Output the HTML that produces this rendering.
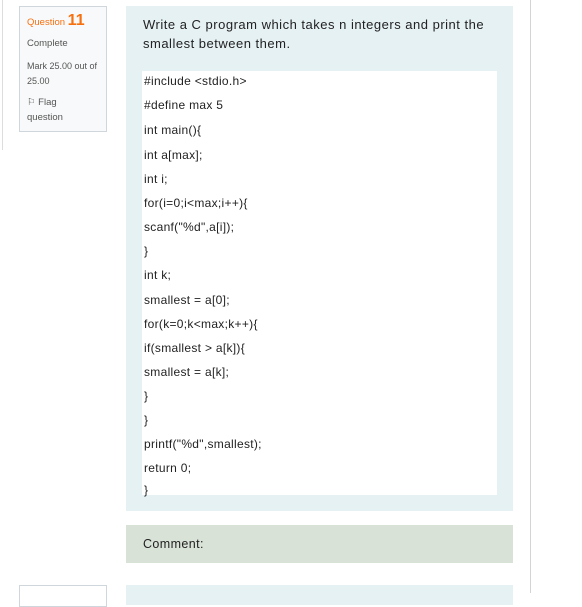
<!DOCTYPE html>
<html><head><style>
body{margin:0;width:582px;height:593px;position:relative;overflow:hidden;background:#fff;font-family:"Liberation Sans",sans-serif;color:#333}
.ab{position:absolute}
.code div{position:absolute;left:2px;font-size:12px;letter-spacing:0.3px;color:#222;white-space:pre}
</style></head><body>
<div class="ab" style="left:2px;top:0;width:1px;height:150px;background:#ddd"></div>
<div class="ab" style="left:530px;top:0;width:1px;height:593px;background:#d4d4d4"></div>
<div class="ab" style="left:19px;top:6px;width:86px;height:124px;border:1px solid #cfd6dc;background:#f8f9fa"></div>
<div class="ab" style="left:27px;top:12px;font-size:9.5px;color:#f7700f">Question <span style="font-size:16px;font-weight:bold">11</span></div>
<div class="ab" style="left:27px;top:38px;font-size:9.5px;color:#555">Complete</div>
<div class="ab" style="left:27px;top:59px;font-size:9px;color:#555;line-height:15px;width:78px">Mark 25.00 out of 25.00</div>
<div class="ab" style="left:27px;top:95px;font-size:9.5px;color:#555;line-height:15px">⚐ Flag<br>question</div>
<div class="ab" style="left:126px;top:6px;width:387px;height:505px;background:#e6f1f4"></div>
<div class="ab" style="left:143px;top:15px;font-size:13px;letter-spacing:0.5px;line-height:19px;color:#222;width:360px">Write a C program which takes n integers and print the smallest between them.</div>
<div class="ab code" style="left:142px;top:71px;width:355px;height:424px;background:#fff">
<div style="top:3px">#include &lt;stdio.h&gt;</div>
<div style="top:27px">#define max 5</div>
<div style="top:52px">int main(){</div>
<div style="top:77px">int a[max];</div>
<div style="top:101px">int i;</div>
<div style="top:125px">for(i=0;i&lt;max;i++){</div>
<div style="top:149px">scanf("%d",a[i]);</div>
<div style="top:173px">}</div>
<div style="top:197px">int k;</div>
<div style="top:222px">smallest = a[0];</div>
<div style="top:246px">for(k=0;k&lt;max;k++){</div>
<div style="top:270px">if(smallest &gt; a[k]){</div>
<div style="top:294px">smallest = a[k];</div>
<div style="top:318px">}</div>
<div style="top:342px">}</div>
<div style="top:366px">printf("%d",smallest);</div>
<div style="top:390px">return 0;</div>
<div style="top:412px">}</div>
</div>
<div class="ab" style="left:126px;top:525px;width:387px;height:38px;background:#d9e2d7"></div>
<div class="ab" style="left:143px;top:537px;font-size:12.5px;letter-spacing:0.4px;color:#222">Comment:</div>
<div class="ab" style="left:19px;top:585px;width:86px;height:20px;border:1px solid #cfd6dc"></div>
<div class="ab" style="left:126px;top:585px;width:387px;height:20px;background:#e6f1f4"></div>
</body></html>
